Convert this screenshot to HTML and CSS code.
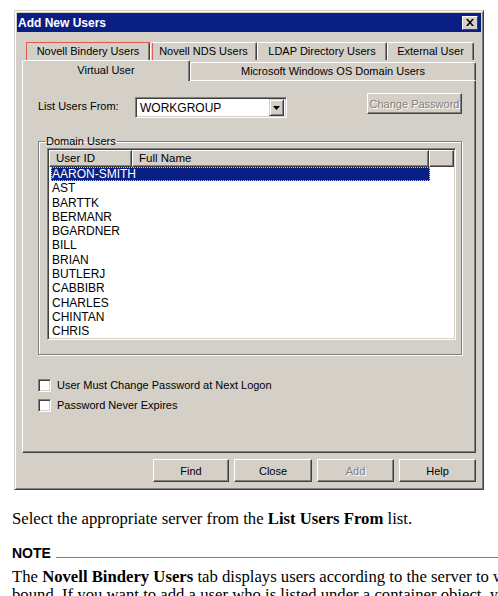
FILE: index.html
```html
<!DOCTYPE html>
<html lang="en">
<head>
  <meta charset="UTF-8" />
  <title>Add New Users</title>
  <link rel="stylesheet" href="styles.css">
</head>
<body>

  <div class="dialog">
    <div class="titlebar">
      <span class="title">Add New Users</span>
      <span class="close-btn">
        <svg width="8" height="7" viewBox="0 0 8 7"><path d="M0 0h2l2 2.5L6 0h2L5 3.5 8 7H6L4 4.5 2 7H0l3-3.5z" fill="#000"/></svg>
      </span>
    </div>

    <div class="dialog-body">
      <div class="tab-row tab-row-back">
        <div class="tab tab-marked" style="width:124px">Novell Bindery Users</div>
        <div class="tab" style="width:107px">Novell NDS Users</div>
        <div class="tab" style="width:130px">LDAP Directory Users</div>
        <div class="tab" style="width:87px">External User</div>
      </div>
      <div class="tab-row tab-row-front">
        <div class="tab tab-active" style="width:168px">Virtual User</div>
        <div class="tab" style="width:286px">Microsoft Windows OS Domain Users</div>
      </div>

      <div class="panel">
        <div class="source-row">
          <label class="source-label">List Users From:</label>
          <div class="combo">
            <span class="combo-value">WORKGROUP</span>
            <span class="combo-arrow">
              <svg width="7" height="4" viewBox="0 0 7 4"><path d="M0 0h7L3.5 4z" fill="#000"/></svg>
            </span>
          </div>
          <button class="btn btn-disabled btn-change">Change Password</button>
        </div>

        <fieldset class="group">
          <legend>Domain Users</legend>
          <div class="listview">
            <div class="lv-header">
              <div class="lv-col" style="width:83px">User ID</div>
              <div class="lv-col" style="width:297px">Full Name</div>
              <div class="lv-col lv-filler"></div>
            </div>
            <ul class="lv-rows" id="userList"></ul>
          </div>
        </fieldset>

        <div class="checks">
          <div class="check-row"><span class="checkbox"></span>User Must Change Password at Next Logon</div>
          <div class="check-row"><span class="checkbox"></span>Password Never Expires</div>
        </div>
      </div>

      <div class="button-row">
        <button class="btn" style="width:76px">Find</button>
        <button class="btn" style="width:78px">Close</button>
        <button class="btn btn-disabled" style="width:77px">Add</button>
        <button class="btn" style="width:77px">Help</button>
      </div>
    </div>
  </div>

  <p class="doc-text">Select the appropriate server from the <b>List Users From</b> list.</p>

  <div class="note-head">
    <span>NOTE</span>
    <span class="note-rule"></span>
  </div>

  <p class="doc-text note-text">The <b>Novell Bindery Users</b> tab displays users according to the server to which you are<br>bound. If you want to add a user who is listed under a container object, you must use the</p>

  <script>
    const users = ["AARON-SMITH", "AST", "BARTTK", "BERMANR", "BGARDNER", "BILL",
      "BRIAN", "BUTLERJ", "CABBIBR", "CHARLES", "CHINTAN", "CHRIS"];

    const list = document.getElementById("userList");
    users.forEach(function (name, i) {
      const li = document.createElement("li");
      li.className = i === 0 ? "lv-item selected" : "lv-item";
      const span = document.createElement("span");
      span.textContent = name;
      li.appendChild(span);
      list.appendChild(li);
    });
  </script>
</body>
</html>
```

FILE: styles.css
```css
html, body {
  margin: 0;
  padding: 0;
  overflow: hidden;
  background: #fff;
}

body {
  width: 498px;
  height: 596px;
}

.dialog {
  width: 464px;
  margin: 10px 0 0 14px;
  padding: 2px;
  background: #d4d0c8;
  border: 1px solid;
  border-color: #d4d0c8 #404040 #404040 #d4d0c8;
  box-shadow: inset 1px 1px #fff, inset -1px -1px #808080;
  font-family: "Liberation Sans", Arial, sans-serif;
  font-size: 11px;
  color: #000;
}

.titlebar {
  height: 19px;
  background: #0a1f84;
  display: flex;
  align-items: center;
  justify-content: space-between;
  padding: 0 3px 0 1px;
}

.title {
  color: #fff;
  font-weight: bold;
  font-size: 12px;
}

.close-btn {
  width: 14px;
  height: 12px;
  background: #d4d0c8;
  border: 1px solid;
  border-color: #fff #404040 #404040 #fff;
  display: flex;
  align-items: center;
  justify-content: center;
}

.dialog-body {
  padding: 10px 5px 5px 5px;
}

.tab-row {
  display: flex;
}

.tab-row-back {
  padding-left: 4px;
  height: 18px;
}

.tab {
  box-sizing: border-box;
  height: 18px;
  border-left: 1px solid #fff;
  border-top: 1px solid #fff;
  border-right: 1px solid #404040;
  box-shadow: inset -1px 0 #808080;
  border-radius: 2px 2px 0 0;
  text-align: center;
  line-height: 16px;
  position: relative;
}

.tab-marked::after {
  content: "";
  position: absolute;
  left: -1px;
  right: -4px;
  top: -1px;
  bottom: -1px;
  border: 1px solid #e35a55;
}

.tab-row-front {
  align-items: flex-end;
}

.tab-row-front .tab {
  height: 18px;
  line-height: 17px;
}

.tab-row-front .tab-active {
  height: 21px;
  line-height: 18px;
  background: #d4d0c8;
  margin-bottom: -1px;
  z-index: 1;
}

.panel {
  box-sizing: border-box;
  height: 373px;
  border: 1px solid;
  border-color: #fff #404040 #404040 #fff;
  box-shadow: inset -1px -1px #808080;
  padding: 12px 13px 0 15px;
}

.source-row {
  display: flex;
  align-items: flex-start;
}

.source-label {
  width: 97px;
  margin-top: 6px;
  line-height: 14px;
}

.combo {
  box-sizing: border-box;
  width: 152px;
  height: 21px;
  margin-top: 4px;
  background: #fff;
  border: 1px solid;
  border-color: #808080 #fff #fff #808080;
  box-shadow: inset 1px 1px #404040, inset -1px -1px #d4d0c8;
  display: flex;
  align-items: center;
  justify-content: space-between;
  padding: 2px;
}

.combo-value {
  padding-left: 2px;
  font-size: 12px;
}

.combo-arrow {
  box-sizing: border-box;
  width: 15px;
  height: 17px;
  background: #d4d0c8;
  border: 1px solid;
  border-color: #d4d0c8 #404040 #404040 #d4d0c8;
  box-shadow: inset 1px 1px #fff, inset -1px -1px #808080;
  display: flex;
  align-items: center;
  justify-content: center;
}

.btn {
  box-sizing: border-box;
  height: 23px;
  padding: 0;
  background: #d4d0c8;
  border: 1px solid;
  border-color: #fff #404040 #404040 #fff;
  box-shadow: inset -1px -1px #808080;
  font-family: "Liberation Sans", Arial, sans-serif;
  font-size: 11px;
  color: #000;
}

.btn-disabled {
  color: #808080;
  text-shadow: 1px 1px #fff;
}

.btn-change {
  width: 95px;
  height: 21px;
  margin-left: auto;
}

.group {
  margin: 16px 0 0 0;
  padding: 0 5px 14px 8px;
  border: 1px solid #808080;
  box-shadow: inset 1px 1px #fff, 1px 1px #fff;
}

.group legend {
  padding: 0 1px;
  margin-left: -2px;
  line-height: 14px;
}

.listview {
  box-sizing: border-box;
  height: 192px;
  background: #fff;
  border: 1px solid;
  border-color: #808080 #fff #fff #808080;
  box-shadow: inset 1px 1px #404040, inset -1px -1px #d4d0c8;
  padding: 1px;
}

.lv-header {
  display: flex;
  height: 17px;
}

.lv-col {
  box-sizing: border-box;
  height: 17px;
  background: #d4d0c8;
  border: 1px solid;
  border-color: #fff #404040 #404040 #fff;
  box-shadow: inset -1px -1px #808080;
  padding-left: 6px;
  line-height: 14px;
  font-size: 11.5px;
}

.lv-filler {
  flex: 1;
}

.lv-rows {
  list-style: none;
  margin: 0;
  padding: 0;
}

.lv-item {
  height: 14.3px;
  line-height: 14px;
  padding-left: 2px;
  font-size: 12px;
}

.lv-item span {
  display: inline-block;
  padding-left: 1px;
}

.lv-item.selected span {
  display: block;
  width: 379px;
  box-sizing: border-box;
  background: #0a1f84;
  color: #fff;
  outline: 1px dotted #d8d86a;
  outline-offset: -1px;
}

.checks {
  margin-top: 20px;
}

.check-row {
  display: flex;
  align-items: center;
  height: 20px;
}

.checkbox {
  box-sizing: border-box;
  width: 13px;
  height: 13px;
  margin-right: 6px;
  background: #fff;
  border: 1px solid;
  border-color: #808080 #fff #fff #808080;
  box-shadow: inset 1px 1px #404040, inset -1px -1px #d4d0c8;
}

.button-row {
  display: flex;
  justify-content: flex-end;
  gap: 5px;
  margin-top: 6px;
  padding-right: 0;
}

.doc-text {
  margin: 20px 0 0 12px;
  font-family: "Liberation Serif", "Times New Roman", serif;
  font-size: 16.7px;
  line-height: 18px;
  white-space: nowrap;
}

.note-head {
  display: flex;
  align-items: flex-end;
  margin: 17px 0 0 12px;
  font-family: "Liberation Sans", Arial, sans-serif;
  font-weight: bold;
  font-size: 14px;
  line-height: 16px;
}

.note-rule {
  flex: 1;
  height: 1px;
  background: #808080;
  margin: 0 0 3px 5px;
}

.note-text {
  margin-top: 7px;
}
```
